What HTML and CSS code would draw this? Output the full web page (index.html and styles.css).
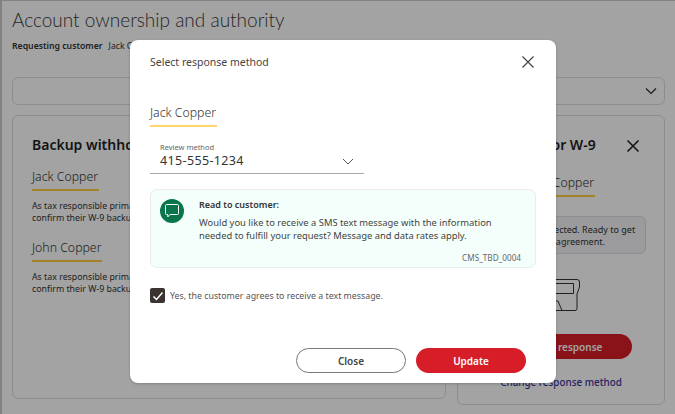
FILE: index.html
```html
<!DOCTYPE html>
<html lang="en">
<head>
<meta charset="utf-8">
<title>Account ownership and authority</title>
<link rel="stylesheet" href="styles.css">
</head>
<body>
<main class="page">
  <h1 class="title">Account ownership and authority</h1>
  <p class="requester"><b>Requesting customer</b><span>Jack Copper</span></p>
  <div class="bar">
    <svg class="bar-chev" width="12" height="8" viewBox="0 0 12 8"><path d="M1 1.500l5 5 5-5" fill="none" stroke="#2b2b2b" stroke-width="1.200"/></svg>
  </div>
  <div class="cards">
    <section class="card card-left">
      <h2 class="card-title">Backup withholding for W-9</h2>
      <div class="person">Jack Copper</div>
      <p class="body">As tax responsible primary, please have the customer<br>confirm their W-9 backup withholding status.</p>
      <div class="person person-john">John Copper</div>
      <p class="body">As tax responsible primary, please have the customer<br>confirm their W-9 backup withholding status.</p>
    </section>
    <section class="card card-right">
      <div class="right-head">
        <h2 class="card-title">Request for W-9</h2>
        <svg class="right-x" width="14" height="14" viewBox="0 0 14 14"><path d="M1.500 1.500l11 11M12.500 1.500l-11 11" stroke="#222" stroke-width="1.600" fill="none"/></svg>
      </div>
      <div class="person person-right">Jack Copper</div>
      <div class="notice">Method selected. Ready to get<br>customer's agreement.</div>
      <svg class="printer" width="38" height="32" viewBox="0 0 38 32"><path d="M3 .5h32q2.500 0 2.500 2.500v5l-2.500 7v14.500q0 2-2 2H5q-2 0-2-2V15L.5 8V3Q.5.500 3 .5zM6 4.500h25.500v10H6zM6 22h10l4 9.500" fill="none" stroke="#333" stroke-width="1"/></svg>
      <button class="send" type="button">Update response</button>
      <a class="change" href="#">Change response method</a>
    </section>
  </div>
</main>
<div class="overlay">
  <div class="modal" role="dialog">
    <header class="modal-head">
      <span class="modal-title">Select response method</span>
      <svg class="modal-x" width="14" height="14" viewBox="0 0 14 14"><path d="M1.500 1.500l11 11M12.500 1.500l-11 11" stroke="#444" stroke-width="1.200" fill="none"/></svg>
    </header>
    <div class="tab"><span>Jack Copper</span></div>
    <div class="field">
      <label class="field-label">Review method</label>
      <div class="field-row">
        <span class="field-value">415-555-1234</span>
        <svg width="12" height="7" viewBox="0 0 12 7"><path d="M1 1l5 5 5-5" fill="none" stroke="#555" stroke-width="1"/></svg>
      </div>
    </div>
    <div class="script">
      <div class="script-icon">
        <svg width="16" height="16" viewBox="0 0 16 16"><path d="M2.500 1.500h11a1 1 0 0 1 1 1v8a1 1 0 0 1-1 1H6.200l-2.400 2.400v-2.400H2.500a1 1 0 0 1-1-1v-8a1 1 0 0 1 1-1z" fill="none" stroke="#fff" stroke-width="1"/></svg>
      </div>
      <div class="script-text">
        <strong class="script-head">Read to customer:</strong>
        <p class="script-body">Would you like to receive a SMS text message with the information needed to fulfill your request? Message and data rates apply.</p>
      </div>
      <span class="script-code">CMS_TBD_0004</span>
    </div>
    <label class="agree">
      <span class="box"><svg width="12" height="10" viewBox="0 0 12 10"><path d="M1.500 5.500l3 3 6-7" fill="none" stroke="#fff" stroke-width="1.500"/></svg></span>
      <span class="agree-text">Yes, the customer agrees to receive a text message.</span>
    </label>
    <div class="actions">
      <button class="btn btn-close" type="button">Close</button>
      <button class="btn btn-update" type="button">Update</button>
    </div>
  </div>
</div>
</body>
</html>
```
FILE: styles.css
```css
* { box-sizing: border-box; }
html, body { margin: 0; height: 100%; }
body {
  width: 675px;
  height: 414px;
  overflow: hidden;
  background: #fff;
  font-family: "Noto Sans", "Open Sans", sans-serif;
  color: #333;
  position: relative;
}
.page { height: 414px; overflow: hidden; padding: 6px 10px 0 10px; border-left: 2px solid #ccc; border-top: 1px solid #ccc; }
.title { margin: 0; font-family: Lato, "Noto Sans", sans-serif; font-size: 19px; font-weight: 300; line-height: 26px; color: #3a3a3a; }
.requester { margin: 6px 0 0; font-size: 8.700px; line-height: 14px; color: #333; display: flex; gap: 6px; }
.requester b { font-weight: 600; }
.bar { margin-top: 24px; height: 28px; border: 1px solid #ddd; border-radius: 6px; display: flex; align-items: center; justify-content: flex-end; padding-right: 7px; }
.cards { display: flex; gap: 11px; margin-top: 10px; align-items: flex-start; }
.card { border: 1px solid #ddd; border-radius: 6px; }
.card-left { width: 434px; height: 284px; padding: 19px 19px; flex: none; }
.card-right { width: 208px; height: 290px; padding: 19px 25px 0; display: flex; flex-direction: column; align-items: center; flex: none; }
.card-title { margin: 0; font-size: 14px; line-height: 20px; font-weight: 600; color: #1f1f1f; white-space: nowrap; }
.person { display: block; margin-top: 13px; padding-bottom: 3px; font-size: 12.300px; font-weight: 300; line-height: 18px; border-bottom: 2px solid #ffcd41; color: #333; width: 67px; white-space: nowrap; }
.body { margin: 10px 0 0; font-size: 8.800px; line-height: 11.500px; color: #333; white-space: nowrap; }
.person-john { margin-top: 15px; width: 70px; }
.right-head { display: flex; justify-content: space-between; align-items: center; width: 100%; padding-left: 4px; }
.right-x { margin-right: -1px; margin-top: 2px; }
.person-right { margin-top: 19px; align-self: flex-start; margin-left: 45px; }
.notice { margin-top: 19px; width: 170px; height: 38px; flex: none; background: #f2f2f6; border: 1px solid #ddd; border-radius: 6px; padding: 7px 8px 0 30px; font-size: 9px; line-height: 11.500px; white-space: nowrap; }
.printer { margin-top: 25px; flex: none; }
.send { margin-top: 23px; width: 142px; height: 25px; flex: none; border: 0; border-radius: 13px; background: #d71e28; color: #fff; font: 600 10px "Noto Sans", sans-serif; }
.change { margin-top: 16px; font-size: 9.900px; line-height: 14px; font-weight: 500; color: #3b3399; text-decoration: none; white-space: nowrap; }

.overlay { position: absolute; inset: 0; background: rgba(0,0,0,.36); padding: 40px 0 0 130px; }
.modal { width: 426px; height: 343px; background: #fff; border-radius: 8px; padding: 0 20px; box-shadow: 0 1px 3px rgba(0,0,0,.2); display: flex; flex-direction: column; }
.modal-head { display: flex; justify-content: space-between; align-items: center; height: 44px; flex: none; }
.modal-title { font-size: 10.500px; color: #444; }
.modal-x { margin-right: 1px; }
.tab { margin-top: 21px; height: 22px; flex: none; display: flex; }
.tab span { width: 67px; font-size: 12.300px; font-weight: 300; line-height: 16px; padding-bottom: 4px; border-bottom: 2px solid #ffd66e; color: #333; white-space: nowrap; }
.field { width: 214px; margin-top: 15px; border-bottom: 1px solid #aaa; padding: 0 10px; height: 32px; flex: none; }
.field-label { display: block; font-size: 7.500px; line-height: 10px; margin-bottom: 1px; color: #666; }
.field-row { display: flex; justify-content: space-between; align-items: center; }
.field-value { font-size: 12.500px; line-height: 16px; color: #333; letter-spacing: .35px; }
.script { position: relative; margin-top: 15px; width: 386px; height: 79px; flex: none; background: #f4fffb; border: 1px solid #e8eeec; border-radius: 7px; padding: 9px; display: flex; gap: 15px; }
.script-icon { width: 24px; height: 24px; border-radius: 50%; background: #08754b; flex: none; display: flex; align-items: center; justify-content: center; }
.script-text { width: 320px; }
.script-head { display: block; font-size: 9px; line-height: 12px; font-weight: 600; color: #333; }
.script-body { margin: 6px 0 0; font-size: 9.400px; line-height: 12.500px; color: #444; }
.script-code { position: absolute; right: 14px; bottom: 4px; font-size: 8.200px; line-height: 10px; color: #666; }
.agree { display: flex; align-items: center; gap: 5px; margin-top: 20px; font-size: 8.800px; color: #555; flex: none; }
.agree-text { padding-top: 1px; }
.box { width: 15px; height: 15px; border-radius: 2px; background: #3b3331; display: flex; align-items: center; justify-content: center; }
.actions { display: flex; justify-content: flex-end; gap: 10px; margin-top: 45px; padding-right: 10px; flex: none; }
.btn { width: 110px; height: 25px; border-radius: 13px; font: 600 10px "Noto Sans", sans-serif; }
.btn-close { background: #fff; border: 1px solid #777; color: #444; }
.btn-update { background: #d71e28; border: 0; color: #fff; }
```
